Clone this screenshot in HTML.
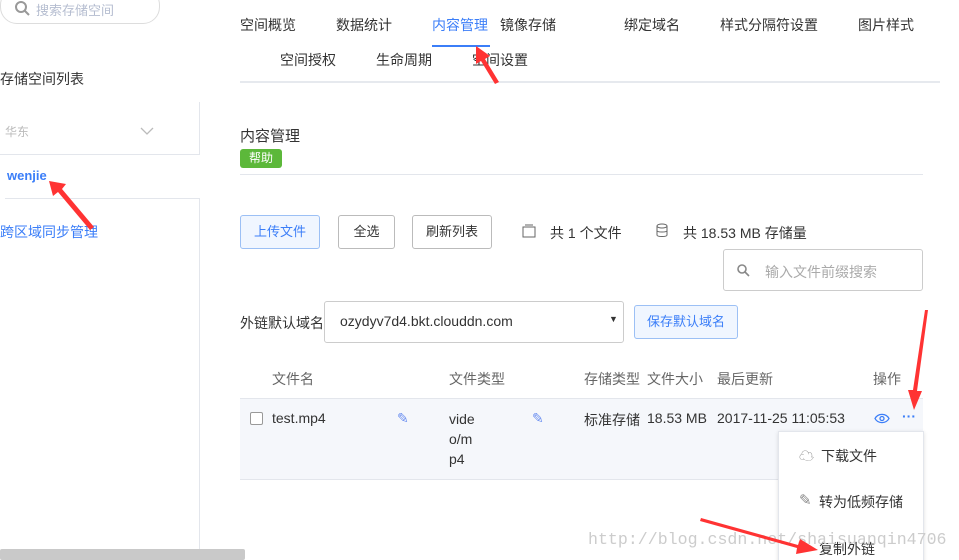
<!DOCTYPE html>
<html><head><meta charset="utf-8"><style>
html,body{margin:0;width:959px;height:560px;overflow:hidden}
body{background:#fff;font-family:"Liberation Sans","Noto Sans CJK SC",sans-serif;color:#333;position:relative;font-size:14px}
.a{position:absolute;white-space:nowrap}
.btn{position:absolute;border:1px solid #bbb;border-radius:3px;height:32px;line-height:32px;text-align:center;font-size:13px;color:#333;background:#fff}
.g{color:#666}
</style></head><body>
<div class="a" style="left:0;top:-12px;width:158px;height:34px;border:1px solid #ddd;border-radius:17px"></div>
<svg class="a" style="left:14px;top:0" width="16" height="16"><circle cx="7" cy="7" r="5" fill="none" stroke="#999" stroke-width="2"/><line x1="11" y1="11" x2="15" y2="15" stroke="#999" stroke-width="2"/></svg>
<div class="a" style="left:36px;top:0;color:#b5bdd0;font-size:13px">搜索存储空间</div>
<div class="a" style="left:0;top:69px;font-size:14px">存储空间列表</div>
<div class="a" style="left:0;top:102px;width:199px;height:52px;border-right:1px solid #e3e6ec;border-bottom:1px solid #e3e6ec"></div>
<div class="a" style="left:5px;top:123px;color:#bbb;font-size:12px">华东</div>
<svg class="a" style="left:140px;top:127px" width="14" height="8"><path d="M1 1L7 7L13 1" fill="none" stroke="#bbb" stroke-width="1.3"/></svg>
<div class="a" style="left:7px;top:168px;color:#3b7ef8;font-weight:bold;font-size:13px">wenjie</div>
<div class="a" style="left:5px;top:198px;width:194px;height:370px;border-top:1px solid #e3e6ec;border-right:1px solid #e3e6ec"></div>
<div class="a" style="left:0;top:222px;color:#3b7ef8;font-size:14px">跨区域同步管理</div>
<div class="a" style="left:0;top:549px;width:245px;height:11px;background:#c9c9c9;border-radius:2px"></div>

<div class="a" style="left:240px;top:15px">空间概览</div>
<div class="a" style="left:336px;top:15px">数据统计</div>
<div class="a" style="left:432px;top:15px;color:#3b7ef8">内容管理</div>
<div class="a" style="left:432px;top:45px;width:58px;height:2px;background:#3b7ef8"></div>
<div class="a" style="left:500px;top:15px">镜像存储</div>
<div class="a" style="left:624px;top:15px">绑定域名</div>
<div class="a" style="left:720px;top:15px">样式分隔符设置</div>
<div class="a" style="left:858px;top:15px">图片样式</div>
<div class="a" style="left:280px;top:50px">空间授权</div>
<div class="a" style="left:376px;top:50px">生命周期</div>
<div class="a" style="left:472px;top:50px">空间设置</div>
<div class="a" style="left:240px;top:81px;width:700px;height:2px;background:#e6e9ee"></div>

<div class="a" style="left:240px;top:125px;font-size:15px">内容管理</div>
<div class="a" style="left:240px;top:149px;width:42px;height:19px;background:#5cb83a;color:#fff;border-radius:3px;font-size:12px;line-height:19px;text-align:center">帮助</div>
<div class="a" style="left:240px;top:174px;width:683px;height:1px;background:#e3e6ec"></div>

<div class="btn" style="left:240px;top:215px;width:78px;border-color:#9cc0f5;background:#f0f6ff;color:#3b7ef8">上传文件</div>
<div class="btn" style="left:338px;top:215px;width:55px">全选</div>
<div class="btn" style="left:412px;top:215px;width:78px">刷新列表</div>
<svg class="a" style="left:522px;top:224px" width="14" height="14"><rect x="1" y="3" width="12" height="10" fill="none" stroke="#666"/><line x1="3" y1="1" x2="11" y2="1" stroke="#666"/></svg>
<div class="a" style="left:550px;top:223px">共 1 个文件</div>
<svg class="a" style="left:656px;top:223px" width="12" height="15"><ellipse cx="6" cy="3" rx="5" ry="2" fill="none" stroke="#666"/><path d="M1 3V12C1 14 11 14 11 12V3M1 7.5C1 9.5 11 9.5 11 7.5" fill="none" stroke="#666"/></svg>
<div class="a" style="left:683px;top:223px">共 18.53 MB 存储量</div>
<div class="a" style="left:723px;top:249px;width:198px;height:40px;border:1px solid #ccc;border-radius:3px"></div>
<svg class="a" style="left:737px;top:264px" width="13" height="13"><circle cx="5" cy="5" r="4" fill="none" stroke="#888" stroke-width="1.6"/><line x1="8" y1="8" x2="12" y2="12" stroke="#888" stroke-width="1.6"/></svg>
<div class="a" style="left:765px;top:262px;color:#aaa">输入文件前缀搜索</div>

<div class="a" style="left:240px;top:313px">外链默认域名</div>
<div class="a" style="left:324px;top:301px;width:298px;height:40px;border:1px solid #ccc;border-radius:3px"></div>
<div class="a" style="left:340px;top:313px;font-size:14px">ozydyv7d4.bkt.clouddn.com</div>
<div class="a" style="left:609px;top:314px;font-size:9px">▼</div>
<div class="btn" style="left:634px;top:305px;width:102px;border-color:#9cc0f5;background:#f0f6ff;color:#3b7ef8">保存默认域名</div>

<div class="a g" style="left:272px;top:369px">文件名</div>
<div class="a g" style="left:449px;top:369px">文件类型</div>
<div class="a g" style="left:584px;top:369px">存储类型</div>
<div class="a g" style="left:647px;top:369px">文件大小</div>
<div class="a g" style="left:717px;top:369px">最后更新</div>
<div class="a g" style="left:873px;top:369px">操作</div>
<div class="a" style="left:240px;top:398px;width:683px;height:80px;background:#f5f7fb;border-top:1px solid #e3e6ec;border-bottom:1px solid #e3e6ec"></div>
<div class="a" style="left:250px;top:412px;width:11px;height:11px;border:1px solid #999;border-radius:2px;background:#fff"></div>
<div class="a" style="left:272px;top:410px;font-size:14px">test.mp4</div>
<div class="a" style="left:397px;top:410px;color:#6b8ff0;font-size:14px">✎</div>
<div class="a" style="left:449px;top:409px;font-size:14px;line-height:20px">vide<br>o/m<br>p4</div>
<div class="a" style="left:532px;top:410px;color:#6b8ff0;font-size:14px">✎</div>
<div class="a" style="left:584px;top:410px;font-size:14px">标准存储</div>
<div class="a" style="left:647px;top:410px;font-size:14px">18.53 MB</div>
<div class="a" style="left:717px;top:410px;font-size:14px">2017-11-25 11:05:53</div>
<svg class="a" style="left:874px;top:413px" width="16" height="11"><path d="M1 5.5C4 0 12 0 15 5.5C12 11 4 11 1 5.5Z" fill="none" stroke="#3b7ef8" stroke-width="1.3"/><circle cx="8" cy="5.5" r="2" fill="none" stroke="#3b7ef8" stroke-width="1.3"/></svg>
<div class="a" style="left:902px;top:408px;color:#3b7ef8;font-weight:bold">···</div>
<div class="a" style="left:778px;top:431px;width:144px;height:140px;background:#fff;border:1px solid #e3e6ec;box-shadow:0 1px 4px rgba(0,0,0,.12)"></div>
<div class="a" style="left:799px;top:445px;color:#888;font-size:15px">☁</div>
<div class="a" style="left:821px;top:446px">下载文件</div>
<div class="a" style="left:799px;top:491px;color:#888;font-size:15px">✎</div>
<div class="a" style="left:819px;top:492px">转为低频存储</div>
<div class="a" style="left:819px;top:539px">复制外链</div>
<div class="a" style="left:588px;top:530px;color:#ccc;font-family:'Liberation Mono',monospace;font-size:16.6px">http://blog.csdn.net/shaisuanqin4706</div>

<svg class="a" style="left:0;top:0" width="959" height="560">
<g fill="#f33">
<polygon points="476,46 490,56 485,59 499,82 495,84 481,61 476,64"/>
<polygon points="49,181 66,184 62,189 94,227 90,230 58,192 53,196"/>
<polygon points="914,410 908,390 913,390 925,310 928,310 917,391 922,391"/>
<polygon points="818,550 796,554 797,548 700,521 701,518 798,545 800,539"/>
</g></svg>
</body></html>
